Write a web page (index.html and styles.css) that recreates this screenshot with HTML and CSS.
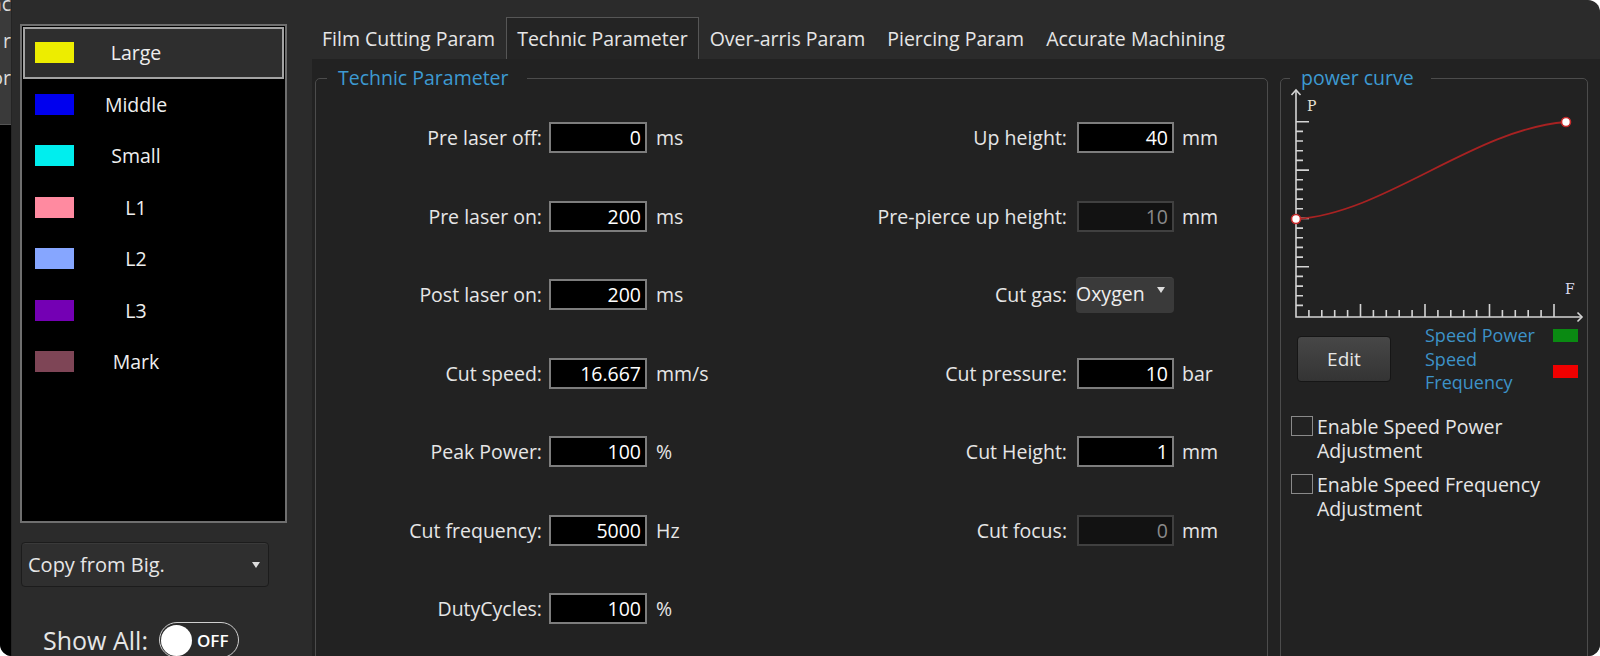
FILE: index.html
```html
<!DOCTYPE html>
<html>
<head>
<meta charset="utf-8">
<title>Technic Parameter</title>
<link rel="stylesheet" href="styles.css">
</head>
<body>
<div class="app">
  <div class="edge">
    <div class="edge-top"><span>nc</span><span>r</span><span>or</span></div>
    <div class="edge-bottom"></div>
  </div>

  <aside class="side">
    <ul class="layers">
      <li class="layer selected"><span class="sw sw-large"></span><span class="name">Large</span></li>
      <li class="layer"><span class="sw sw-middle"></span><span class="name">Middle</span></li>
      <li class="layer"><span class="sw sw-small"></span><span class="name">Small</span></li>
      <li class="layer"><span class="sw sw-l1"></span><span class="name">L1</span></li>
      <li class="layer"><span class="sw sw-l2"></span><span class="name">L2</span></li>
      <li class="layer"><span class="sw sw-l3"></span><span class="name">L3</span></li>
      <li class="layer"><span class="sw sw-mark"></span><span class="name">Mark</span></li>
    </ul>
    <div class="combo"><span class="combo-text">Copy from Big.</span><span class="caret"></span></div>
    <div class="showall">
      <span class="showall-label">Show All:</span>
      <span class="toggle"><span class="knob"></span><span class="off">OFF</span></span>
    </div>
  </aside>

  <main class="main">
    <nav class="tabs">
      <span class="tab">Film Cutting Param</span>
      <span class="tab active">Technic Parameter</span>
      <span class="tab">Over-arris Param</span>
      <span class="tab">Piercing Param</span>
      <span class="tab">Accurate Machining</span>
    </nav>

    <section class="content">
      <fieldset class="group tech">
        <legend class="legend-tech">Technic Parameter</legend>
        <div class="params">
          <div class="pcol left">
            <span class="lbl">Pre laser off:</span><input class="field" type="text" value="0" readonly><span class="unit">ms</span>
            <span class="lbl">Pre laser on:</span><input class="field" type="text" value="200" readonly><span class="unit">ms</span>
            <span class="lbl">Post laser on:</span><input class="field" type="text" value="200" readonly><span class="unit">ms</span>
            <span class="lbl">Cut speed:</span><input class="field" type="text" value="16.667" readonly><span class="unit">mm/s</span>
            <span class="lbl">Peak Power:</span><input class="field" type="text" value="100" readonly><span class="unit">%</span>
            <span class="lbl">Cut frequency:</span><input class="field" type="text" value="5000" readonly><span class="unit">Hz</span>
            <span class="lbl">DutyCycles:</span><input class="field" type="text" value="100" readonly><span class="unit">%</span>
          </div>
          <div class="pcol right">
            <span class="lbl">Up height:</span><input class="field" type="text" value="40" readonly><span class="unit">mm</span>
            <span class="lbl">Pre-pierce up height:</span><input class="field dis" type="text" value="10" disabled><span class="unit">mm</span>
            <span class="lbl">Cut gas:</span><span class="dd"><span class="dd-text">Oxygen</span><span class="caret"></span></span><span class="unit"></span>
            <span class="lbl">Cut pressure:</span><input class="field" type="text" value="10" readonly><span class="unit">bar</span>
            <span class="lbl">Cut Height:</span><input class="field" type="text" value="1" readonly><span class="unit">mm</span>
            <span class="lbl">Cut focus:</span><input class="field dis" type="text" value="0" disabled><span class="unit">mm</span>
          </div>
        </div>
      </fieldset>

      <fieldset class="group curve">
        <legend class="legend-curve">power curve</legend>
        <svg class="chart" width="304" height="240" viewBox="0 0 304 240">
          <g class="axis" fill="none" stroke="#d4d4d4" stroke-width="1.6">
            <path d="M12 6V233H298"/>
            <path d="M7.5 11L12 6L16.5 11"/>
            <path d="M293.5 228.5L298 233L293.5 237.5"/>
            <path d="M12 37.7h13M12 47.4h7M12 57h7M12 66.7h7M12 76.4h7M12 86.1h13M12 95.7h7M12 105.4h7M12 115.1h7M12 124.7h7M12 134.4h13M12 144.1h7M12 153.7h7M12 163.4h7M12 173.1h7M12 182.8h13M12 192.4h7M12 202.1h7M12 211.8h7M12 221.4h7"/>
            <path d="M24.9 233v-7M37.8 233v-7M50.7 233v-7M63.6 233v-7M76.5 233v-13M89.4 233v-7M102.3 233v-7M115.2 233v-7M128.1 233v-7M141 233v-13M153.9 233v-7M166.8 233v-7M179.7 233v-7M192.6 233v-7M205.5 233v-13M218.4 233v-7M231.3 233v-7M244.2 233v-7M257.1 233v-7M270 233v-13"/>
          </g>
          <text class="axis-label" x="23" y="27">P</text>
          <text class="axis-label axis-f" x="281" y="210">F</text>
          <path d="M12 135C100 130 190 45 282 38" fill="none" stroke="#a82222" stroke-width="1.8"/>
          <circle cx="12" cy="135" r="4.5" fill="#fff" stroke="#c42a2a" stroke-width="1.6"/>
          <circle cx="282" cy="38" r="4.5" fill="#fff" stroke="#c42a2a" stroke-width="1.6"/>
        </svg>
        <div class="curve-row">
          <button class="edit" type="button">Edit</button>
          <div class="keys">
            <span class="key-text">Speed Power</span><span class="key-sw key-green"></span>
            <span class="key-text">Speed Frequency</span><span class="key-sw key-red"></span>
          </div>
        </div>
        <div class="checks">
          <label class="check"><span class="box"></span><span class="check-text">Enable Speed Power Adjustment</span></label>
          <label class="check"><span class="box"></span><span class="check-text">Enable Speed Frequency Adjustment</span></label>
        </div>
      </fieldset>
    </section>
  </main>
</div>
</body>
</html>
```

FILE: styles.css
```css
* { box-sizing: border-box; }
html, body { margin: 0; padding: 0; background: #ffffff; }
body {
  width: 1600px;
  height: 656px;
  overflow: hidden;
  font-family: "Open Sans", "Noto Sans", sans-serif;
}

.app {
  width: 1600px;
  height: 656px;
  display: flex;
  background: #2b2b2b;
  border-radius: 0 12px 12px 12px;
  overflow: hidden;
  color: #e6e6e6;
  font-size: 19.5px;
}

/* window behind, at far left */
.edge { width: 12px; flex: none; display: flex; flex-direction: column; border-right: 1px solid #242424; }
.edge-top {
  height: 125px;
  background: #3a3a3a;
  overflow: hidden;
  direction: rtl;
  color: #dcdcdc;
  border-bottom: 1px solid #555;
}
.edge-top span { display: block; line-height: 37px; white-space: nowrap; }
.edge-top span:first-child { margin-top: -15px; }
.edge-bottom { flex: 1; background: #000; }

/* left side panel */
.side { width: 288px; flex: none; padding: 24px 0 0 8px; }
.layers {
  list-style: none;
  margin: 0;
  padding: 1px;
  width: 267px;
  height: 499px;
  border: 2px solid #6f6f6f;
  background: #000;
}
.layer { height: 51.5px; display: flex; align-items: center; border: 2px solid transparent; }
.layer.selected { background: #2e2e2e; border-color: #a3a3a3; }
.sw { width: 39px; height: 21px; margin-left: 10px; flex: none; }
.sw-large { background: #eded00; }
.sw-middle { background: #0000ee; }
.sw-small { background: #00eeee; }
.sw-l1 { background: #ff8aa0; }
.sw-l2 { background: #86a6ff; }
.sw-l3 { background: #7400b4; }
.sw-mark { background: #7e4556; }
.name { width: 124px; text-align: center; color: #eeeeee; }

.combo {
  margin: 19px 0 0 1px;
  width: 248px;
  height: 45px;
  background: #2f2f2f;
  border: 1px solid #1c1c1c;
  border-radius: 4px;
  box-shadow: inset 0 1px 0 #3a3a3a;
  display: flex;
  align-items: center;
  padding: 0 8px 0 6px;
  font-size: 20px;
}
.combo-text { flex: 1; white-space: nowrap; }
.caret {
  width: 0;
  height: 0;
  flex: none;
  border-left: 4.5px solid transparent;
  border-right: 4.5px solid transparent;
  border-top: 6px solid #dddddd;
}

.showall { margin: 35px 0 0 23px; display: flex; align-items: flex-start; gap: 11px; }
.showall-label { font-size: 25px; line-height: 36px; white-space: nowrap; }
.toggle {
  width: 80px;
  height: 36px;
  border: 1.5px solid #cfcfcf;
  border-radius: 18px;
  display: flex;
  align-items: center;
  padding-left: 1px;
}
.knob { width: 31px; height: 31px; border-radius: 50%; background: #ffffff; flex: none; }
.off { margin-left: 5px; font-size: 17px; font-weight: 600; color: #ffffff; }

/* main area */
.main { flex: 1; min-width: 0; display: flex; flex-direction: column; }
.tabs { height: 59px; flex: none; display: flex; align-items: flex-end; padding-left: 11px; }
.tab {
  height: 42px;
  padding: 0 10px;
  line-height: 42px;
  white-space: nowrap;
  color: #e6e6e6;
  border: 1px solid transparent;
  border-bottom: 0;
}
.tab.active { background: #242424; border-color: #565656; }

.content {
  flex: 1;
  margin-left: 12px;
  background: #222222;
  display: flex;
  gap: 12px;
  padding: 0 12px 0 3px;
  overflow: hidden;
}
.group {
  margin: 7px 0 0;
  border: 1px solid #4c4c4c;
  border-radius: 5px;
  padding: 0;
  height: 640px;
  min-width: 0;
  flex: none;
}
.group legend { font-size: 19.5px; line-height: 24px; color: #3d9ad2; white-space: nowrap; }
.legend-tech { margin-left: 11px; padding: 0 18px 0 11px; }
.legend-curve { margin-left: 9px; padding: 0 17px 0 11px; }
.tech { width: 953px; padding-top: 32px; }
.curve { width: 308px; }

.params { display: flex; }
.pcol { display: grid; grid-auto-rows: 31px; row-gap: 47.5px; align-items: center; }
.pcol.left { grid-template-columns: 233px 98px 151px; }
.pcol.right { grid-template-columns: 279px 97px 60px; }
.lbl { text-align: right; white-space: nowrap; color: #e6e6e6; }
.left .lbl { padding-right: 7px; }
.right .lbl { padding-right: 10px; }
.unit { white-space: nowrap; }
.left .unit { padding-left: 9px; }
.right .unit { padding-left: 8px; }

.field {
  display: block;
  width: 100%;
  height: 31px;
  margin: 0;
  border: 2px solid #7d7d7d;
  border-radius: 0;
  background: #000000;
  color: #ffffff;
  font: inherit;
  text-align: right;
  padding: 0 4px;
  outline: none;
}
.field.dis { background: #121212; border-color: #404040; color: #8a8a8a; }

.dd {
  height: 36px;
  background: #3a3a3a;
  border-radius: 4px;
  border-top: 1px solid #454545;
  display: flex;
  align-items: center;
  padding: 0 9px 4px 0;
  margin-left: -1px;
}
.dd-text { flex: 1; white-space: nowrap; color: #eeeeee; }
.dd .caret { margin-top: -6px; }

/* power curve */
.chart { display: block; margin: -6px 0 0 3px; }
.axis-label { font-family: "DejaVu Serif", "Liberation Serif", serif; font-size: 14px; fill: #e8e2d6; }
.axis-f { fill: #dcdcf0; }
.curve-row { display: flex; align-items: flex-start; }
.edit {
  margin: 12px 0 0 16px;
  width: 94px;
  height: 46px;
  border: 1px solid #161616;
  border-radius: 4px;
  background: linear-gradient(#474747, #343434);
  color: #e6e6e6;
  font-family: inherit;
  font-size: 19px;
  padding: 0;
  flex: none;
}
.keys {
  margin-left: 34px;
  display: grid;
  grid-template-columns: 128px 25px;
  align-items: center;
  font-size: 18px;
  line-height: 23.5px;
  color: #3d92c8;
}
.key-sw { width: 25px; height: 13px; }
.key-green { background: #0a8a12; }
.key-red { background: #f00000; }

.checks { margin: 20px 0 0 10px; display: flex; flex-direction: column; gap: 10px; }
.check { display: flex; align-items: flex-start; gap: 4px; line-height: 24px; color: #e6e6e6; }
.box { width: 22px; height: 20px; border: 1.5px solid #8a8a8a; margin-top: 1px; flex: none; }
.check-text { max-width: 250px; }
```
